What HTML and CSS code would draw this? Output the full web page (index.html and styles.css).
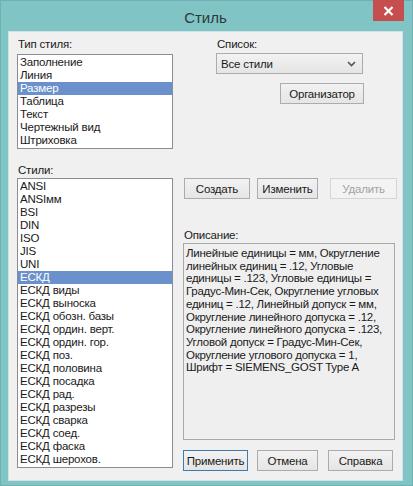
FILE: index.html
```html
<!DOCTYPE html>
<html lang="ru">
<head>
<meta charset="utf-8">
<title>Стиль</title>
<link rel="stylesheet" href="styles.css">
</head>
<body>
<div class="window">
  <div class="titlebar">
    <span class="title">Стиль</span>
    <button class="close" aria-label="Закрыть">
      <svg width="11" height="10" viewBox="0 0 11 10"><path d="M1.5 1 L9.5 9 M9.5 1 L1.5 9" stroke="#fff" stroke-width="2.2" fill="none"/></svg>
    </button>
  </div>
  <div class="panel">
    <div class="col-left">
      <div class="label">Тип стиля:</div>
      <ul class="list list-types">
        <li>Заполнение</li>
        <li>Линия</li>
        <li class="sel">Размер</li>
        <li>Таблица</li>
        <li>Текст</li>
        <li>Чертежный вид</li>
        <li>Штриховка</li>
      </ul>
      <div class="label label-styles">Стили:</div>
      <ul class="list list-styles">
        <li>ANSI</li>
        <li>ANSIмм</li>
        <li>BSI</li>
        <li>DIN</li>
        <li>ISO</li>
        <li>JIS</li>
        <li>UNI</li>
        <li class="sel">ЕСКД</li>
        <li>ЕСКД виды</li>
        <li>ЕСКД выноска</li>
        <li>ЕСКД обозн. базы</li>
        <li>ЕСКД ордин. верт.</li>
        <li>ЕСКД ордин. гор.</li>
        <li>ЕСКД поз.</li>
        <li>ЕСКД половина</li>
        <li>ЕСКД посадка</li>
        <li>ЕСКД рад.</li>
        <li>ЕСКД разрезы</li>
        <li>ЕСКД сварка</li>
        <li>ЕСКД соед.</li>
        <li>ЕСКД фаска</li>
        <li>ЕСКД шерохов.</li>
      </ul>
    </div>
    <div class="col-right">
      <div class="top">
        <div class="label">Список:</div>
        <div class="select">
          <span>Все стили</span>
          <svg width="9" height="6" viewBox="0 0 9 6"><path d="M1 1 L4.5 4.5 L8 1" stroke="#555" stroke-width="1.6" fill="none"/></svg>
        </div>
        <div class="org-row"><button class="btn btn-org">Организатор</button></div>
      </div>
      <div class="actions">
        <button class="btn btn-create">Создать</button>
        <button class="btn btn-edit">Изменить</button>
        <button class="btn btn-del" disabled>Удалить</button>
      </div>
      <div class="label label-desc">Описание:</div>
      <div class="desc">Линейные единицы = мм, Округление<br>линейных единиц = .12, Угловые<br>единицы = .123, Угловые единицы =<br>Градус-Мин-Сек, Округление угловых<br>единиц = .12, Линейный допуск = мм,<br>Округление линейного допуска = .12,<br>Округление линейного допуска = .123,<br>Угловой допуск = Градус-Мин-Сек,<br>Округление углового допуска = 1,<br>Шрифт = SIEMENS_GOST Type A</div>
      <div class="bottom">
        <button class="btn btn-apply">Применить</button>
        <button class="btn btn-cancel">Отмена</button>
        <button class="btn btn-help">Справка</button>
      </div>
    </div>
  </div>
</div>
</body>
</html>
```

FILE: styles.css
```css
* { box-sizing: border-box; }
html, body { margin: 0; padding: 0; }
body {
  width: 413px;
  height: 486px;
  background: #7fc3c4;
  font-family: "Liberation Sans", Arial, sans-serif;
  font-size: 11.5px;
  letter-spacing: -0.2px;
  color: #1a1a1a;
}
.window {
  position: relative;
  width: 413px;
  height: 486px;
  background: #80c4c5;
  border: 1px solid #6fb1b3;
  display: flex;
  flex-direction: column;
}
.titlebar {
  height: 30px;
  flex: none;
  display: flex;
  align-items: center;
  justify-content: center;
}
.title {
  font-size: 15px;
  letter-spacing: 0;
  color: #2e3a3a;
  margin-top: 3px;
  margin-left: -2px;
}
.close {
  position: absolute;
  top: -1px;
  right: 8px;
  width: 31px;
  height: 21px;
  border: none;
  padding: 0;
  background: #c74e4e;
  display: flex;
  align-items: center;
  justify-content: center;
}
.panel {
  flex: none;
  height: 450px;
  margin: 0 9px 0 7px;
  background: #f0f0f0;
  border: 1px solid #cfe3e3;
  display: flex;
  gap: 10px;
  padding: 6px 5px 0 8px;
}
.label {
  height: 13px;
  line-height: 13px;
  padding-left: 1px;
}
.col-left {
  width: 156px;
  flex: none;
  display: flex;
  flex-direction: column;
}
.list {
  list-style: none;
  margin: 0;
  background: #fff;
  border: 1px solid #8a8d93;
  padding: 1px 0 0 0;
}
.list li {
  height: 13px;
  line-height: 13px;
  padding-left: 2px;
  white-space: nowrap;
}
.list li.sel {
  background: #6a91cb;
  color: #fff;
}
.list-types {
  margin-top: 3px;
  height: 95px;
}
.label-styles { margin-top: 15px; }
.list-styles {
  margin-top: 1px;
  height: 290px;
}
.col-right {
  width: 214px;
  flex: none;
  display: flex;
  flex-direction: column;
}
.top {
  padding-left: 33px;
}
.select {
  margin-top: 2px;
  width: 147px;
  height: 21px;
  border: 1px solid #acacac;
  background: linear-gradient(#f2f2f2, #e5e5e5);
  display: flex;
  align-items: center;
  justify-content: space-between;
  padding: 0 6px 0 4px;
}
.org-row {
  width: 148px;
  display: flex;
  justify-content: flex-end;
  margin-top: 9px;
}
.btn {
  height: 21px;
  border: 1px solid #acacac;
  background: linear-gradient(#f2f2f2, #e5e5e5);
  font-family: inherit;
  font-size: 11.5px;
  letter-spacing: -0.2px;
  color: #1a1a1a;
  padding: 0;
  margin: 0;
  text-align: center;
}
.btn-org { width: 84px; }
.actions {
  margin-top: 74px;
  display: flex;
  padding-left: 1px;
}
.btn-create { width: 66px; }
.btn-edit { width: 61px; margin-left: 7px; }
.btn-del {
  width: 67px;
  margin-left: 12px;
  color: #a3a3a3;
  border-color: #d5d5d5;
  background: #f3f3f3;
}
.label-desc { margin-top: 30px; }
.desc {
  margin-top: 1px;
  width: 212px;
  height: 197px;
  border: 1px solid #a9a9a9;
  background: #efefef;
  padding: 3px 0 0 2px;
  line-height: 12.7px;
  letter-spacing: -0.25px;
  white-space: nowrap;
  overflow: hidden;
}
.bottom {
  margin-top: 10px;
  display: flex;
}
.btn-apply { width: 65px; border-color: #3d7bad; }
.btn-cancel { width: 61px; margin-left: 9px; }
.btn-help { width: 65px; margin-left: 10px; }
```
